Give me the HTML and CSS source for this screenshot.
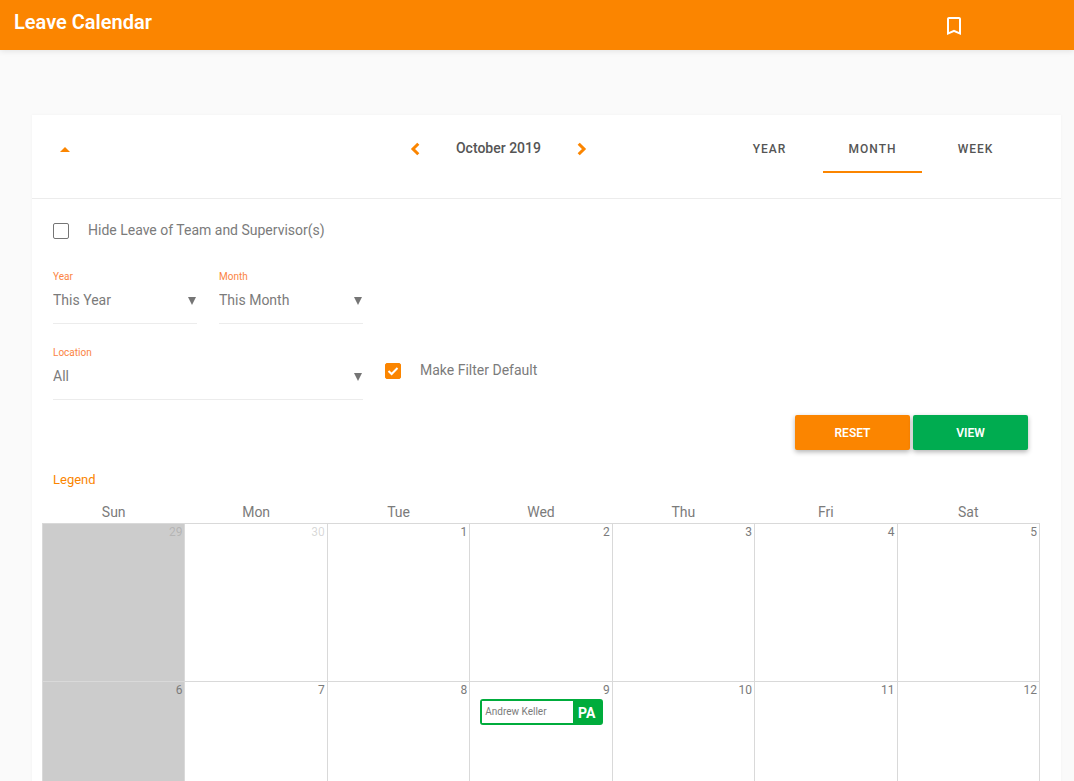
FILE: index.html
```html
<!DOCTYPE html>
<html lang="en">
<head>
<meta charset="utf-8">
<title>Leave Calendar</title>
<link rel="stylesheet" href="styles.css">
</head>
<body>
<header class="topbar">
  <h1 class="topbar-title">Leave Calendar</h1>
  <button class="icon-btn" type="button" aria-label="Bookmark">
    <svg width="24" height="24" viewBox="0 0 24 24" fill="#fff"><path d="M17 3H7c-1.100 0-2 .9-2 2v16l7-3 7 3V5c0-1.100-.9-2-2-2zm0 15l-5-2.180L7 18V5h10v13z"/></svg>
  </button>
</header>
<main class="card">
  <div class="card-head">
    <button class="icon-btn" type="button" aria-label="Collapse filters">
      <svg width="10" height="6" viewBox="0 0 10 6" fill="#fb8500"><path d="M0 6 5 1l5 5z"/></svg>
    </button>
    <div class="period">
      <button class="icon-btn" type="button" aria-label="Previous month">
        <svg width="11" height="14" viewBox="0 0 11 14" fill="none" stroke="#fb8500" stroke-width="3"><path d="M8.300 1.800 3 7l5.300 5.200"/></svg>
      </button>
      <h2 class="period-title">October 2019</h2>
      <button class="icon-btn" type="button" aria-label="Next month">
        <svg width="11" height="14" viewBox="0 0 11 14" fill="none" stroke="#fb8500" stroke-width="3"><path d="M2.700 1.800 8 7l-5.300 5.200"/></svg>
      </button>
    </div>
    <nav class="tabs">
      <button class="tab" type="button">YEAR</button>
      <button class="tab tab-active" type="button">MONTH</button>
      <button class="tab" type="button">WEEK</button>
    </nav>
  </div>
  <form class="filters">
    <label class="check"><input type="checkbox">Hide Leave of Team and Supervisor(s)</label>
    <div class="filter-grid">
      <div class="field">
        <label for="year">Year</label>
        <div class="select"><select id="year"><option>This Year</option></select><svg width="8" height="8" viewBox="0 0 8 8" fill="#757575"><path d="M0 0h8L4 8z"/></svg></div>
      </div>
      <div class="field">
        <label for="month">Month</label>
        <div class="select"><select id="month"><option>This Month</option></select><svg width="8" height="8" viewBox="0 0 8 8" fill="#757575"><path d="M0 0h8L4 8z"/></svg></div>
      </div>
      <div class="field field-wide">
        <label for="location">Location</label>
        <div class="select"><select id="location"><option>All</option></select><svg width="8" height="8" viewBox="0 0 8 8" fill="#757575"><path d="M0 0h8L4 8z"/></svg></div>
      </div>
      <label class="check check-default"><input type="checkbox" checked>Make Filter Default</label>
    </div>
    <div class="actions">
      <button class="btn btn-reset" type="reset">RESET</button>
      <button class="btn btn-view" type="button">VIEW</button>
    </div>
    <a class="legend" href="#legend">Legend</a>
  </form>
  <div class="calendar">
    <table>
      <thead>
        <tr><th>Sun</th><th>Mon</th><th>Tue</th><th>Wed</th><th>Thu</th><th>Fri</th><th>Sat</th></tr>
      </thead>
      <tbody>
        <tr><td class="off other">29</td><td class="other">30</td><td>1</td><td>2</td><td>3</td><td>4</td><td>5</td></tr>
        <tr><td class="off">6</td><td>7</td><td>8</td><td>9<a class="event" href="#leave"><span class="event-name">Andrew Keller</span><span class="event-code">PA</span></a></td><td>10</td><td>11</td><td>12</td></tr>
      </tbody>
    </table>
  </div>
</main>
</body>
</html>
```
FILE: styles.css
```css
* {
  box-sizing: border-box;
}

body {
  margin: 0;
  height: 100vh;
  overflow: hidden;
  background: #fafafa;
  color: #7b7b7b;
  font: 14px/20px Roboto, sans-serif;
}

button {
  margin: 0;
  padding: 0;
  border: 0;
  background: none;
  font-family: inherit;
  cursor: pointer;
}

.topbar {
  display: flex;
  align-items: center;
  justify-content: space-between;
  height: 50px;
  padding: 2px 108px 0 14px;
  background: #fb8500;
  box-shadow: 0 1px 6px rgba(0, 0, 0, 0.1);
}

.topbar-title {
  margin: 0;
  padding-bottom: 8px;
  color: #fff;
  font-size: 20px;
  line-height: 24px;
  font-weight: 600;
}

.icon-btn {
  display: flex;
}

.card {
  margin: 65px 13px 0 32px;
  background: #fff;
  box-shadow: 0 0 3px rgba(0, 0, 0, 0.04);
}

.card-head {
  display: flex;
  align-items: center;
  height: 84px;
  padding: 0 36px 16px 28px;
  border-bottom: 1px solid #ececec;
}

.period {
  display: flex;
  align-items: center;
  gap: 35px;
  margin: 0 133px 0 auto;
}

.period-title {
  margin: 0;
  padding-bottom: 2px;
  color: #555;
  font-size: 14px;
  font-weight: 500;
}

.tabs {
  display: flex;
  gap: 4px;
  align-self: flex-end;
  margin-bottom: 9px;
}

.tab {
  width: 99px;
  height: 48px;
  padding-top: 2px;
  border-bottom: 2px solid transparent;
  color: #555;
  font-size: 12px;
  font-weight: 500;
  letter-spacing: 1px;
}

.tab-active {
  border-bottom-color: #fb8500;
}

.filters {
  padding: 21px 33px 0 21px;
}

.check {
  display: flex;
  align-items: center;
  gap: 19px;
}

.check-default {
  padding-bottom: 4px;
}

.check input {
  appearance: none;
  width: 16px;
  height: 16px;
  margin: 1px 0 0;
  border: 1px solid #757575;
  border-radius: 2px;
}

.check input:checked {
  border-color: #fb8500;
  background: #fb8500 url("data:image/svg+xml,%3Csvg xmlns='http://www.w3.org/2000/svg' viewBox='0 0 14 14'%3E%3Cpath d='M2.500 7 5.600 10 11.500 4' fill='none' stroke='white' stroke-width='2'/%3E%3C/svg%3E");
}

.filter-grid {
  display: grid;
  grid-template-columns: 144px 144px 1fr;
  gap: 20px 22px;
  align-items: center;
  margin-top: 28px;
}

.field label {
  display: block;
  color: #fb8443;
  font-size: 10px;
  line-height: 18px;
}

.field-wide {
  grid-column: span 2;
}

.select {
  display: grid;
  align-items: center;
  height: 38px;
  padding-bottom: 9px;
  border-bottom: 1px solid #ececec;
}

.select select,
.select svg {
  grid-area: 1 / 1;
}

.select svg {
  justify-self: end;
  margin: 2px 1px 0 0;
  pointer-events: none;
}

.select select {
  appearance: none;
  width: 100%;
  height: 28px;
  padding: 0;
  border: 0;
  background: none;
  color: inherit;
  font: inherit;
}

.actions {
  display: flex;
  justify-content: flex-end;
  gap: 3px;
  margin-top: 15px;
}

.btn {
  width: 115px;
  height: 35px;
  border-radius: 2px;
  color: #fff;
  font-size: 12px;
  font-weight: 600;
  box-shadow: 0 2px 5px rgba(0, 0, 0, 0.3);
}

.btn-reset {
  background: #fb8500;
}

.btn-view {
  background: #00ac50;
}

.legend {
  display: inline-block;
  margin-top: 20px;
  color: #fb8500;
  font-size: 13px;
  text-decoration: none;
}

.calendar {
  padding: 12px 21px 0 10px;
}

table {
  width: 100%;
  border-collapse: collapse;
  table-layout: fixed;
}

th {
  height: 21px;
  padding: 0;
  font-weight: 400;
}

td {
  height: 158px;
  padding: 0 2px 0 0;
  border: 1px solid #d9d9d9;
  font-size: 12px;
  line-height: 16px;
  text-align: right;
  vertical-align: top;
}

.off {
  background: #ccc;
}

.other {
  color: rgba(123, 123, 123, 0.3);
}

.event {
  display: flex;
  height: 26px;
  margin: 1px 7px 0 10px;
  border: 2px solid #00ac3c;
  border-radius: 3px;
  background: #00ac3c;
  line-height: 22px;
  text-decoration: none;
}

.event-name {
  flex: 1;
  padding-left: 3px;
  background: #fff;
  color: #7b7b7b;
  font-size: 10px;
  text-align: left;
}

.event-code {
  width: 28px;
  color: #fff;
  font-size: 14px;
  font-weight: 700;
  line-height: 24px;
  text-align: center;
}
```
